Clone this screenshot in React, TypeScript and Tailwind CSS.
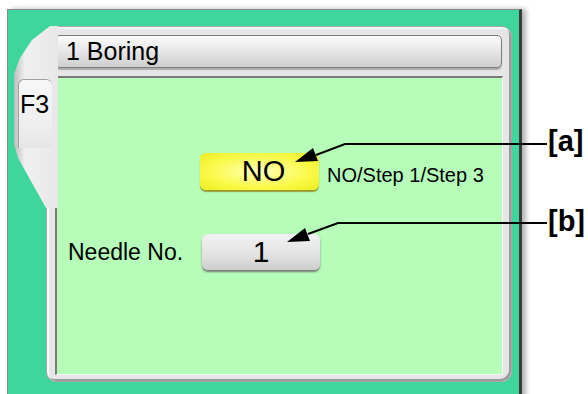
import React from "react";

const font = { fontFamily: '"Liberation Sans", Arial, sans-serif' };

function Arrows() {
  return (
    <svg className="absolute left-0 top-0 pointer-events-none" width={588} height={394}>
      <polyline points="547,144 345,144 316,155" fill="none" stroke="#000" strokeWidth={2} />
      <polygon points="295,162 318,161 313,148" fill="#000" />
      <polyline points="547,223 338,223 308,234" fill="none" stroke="#000" strokeWidth={2} />
      <polygon points="287,242 310,241 305,228" fill="#000" />
    </svg>
  );
}

export default function App() {
  return (
    <div className="relative w-[588px] h-[394px] bg-white overflow-hidden flex" style={font}>
      {/* machine screen frame */}
      <div className="ml-[7px] mt-[9px] w-[515px] h-[390px] bg-[#3ed69c] border-l border-t border-[#8a8a8a] border-r-[3px] border-r-[#3a3a3a] shadow-[4px_0_5px_rgba(0,0,0,0.3)] pt-[16px] pl-[6px] flex items-start">
        {/* left tab bulge */}
        <div className="relative w-[32px] h-[182px] shrink-0">
          <div
            className="absolute left-0 top-0 w-[44px] h-[182px] bg-[linear-gradient(to_right,#bdbdbd,#f0f0f0_25%,#e8e8e8)]"
            style={{ clipPath: "polygon(36px 0, 44px 0, 44px 182px, 32px 182px, 4px 132px, 0 118px, 0 48px, 6px 32px, 18px 14px)" }}
          />
          <div className="relative z-10 ml-[4px] mt-[53px] w-[34px] h-[69px] rounded-t-[6px] border-l border-t border-[#a0a0a0] bg-[linear-gradient(to_bottom,#f7f7f7,#eeeeee_70%,#e6e6e6)] pt-[10px] pl-[1px] text-[25px] leading-[1.15] text-black">
            F3
          </div>
        </div>

        {/* main panel */}
        <div className="w-[466px] h-[356px] rounded-[10px] border border-[#a8a8a8] bg-[#e6e6e6] shadow-[inset_2px_2px_0_#fafafa,inset_-2px_-2px_0_#9a9a9a] pl-[8px] pt-[8px] flex flex-col">
          <div className="w-[447px] h-[33px] rounded-[5px] border border-[#7c7c7c] bg-[linear-gradient(to_bottom,#fbfbfb,#e6e6e6_50%,#cfcfcf)] shadow-[0_2px_1px_rgba(0,0,0,0.25)] flex items-center pl-[10px] text-[25px] text-black">
            1 Boring
          </div>
          <div className="mt-[8px] w-[448px] h-[299px] border-t-2 border-l-2 border-[#7a7a7a] border-r border-b border-r-[#f4f4f4] border-b-[#f4f4f4] bg-[#b5fdb9] flex flex-col">
            <div className="flex items-center ml-[143px] mt-[75px]">
              <div className="w-[119px] h-[37px] rounded-[6px] bg-[radial-gradient(ellipse_at_center,#ffffb8,#fafa48_60%,#ecec20)] shadow-[0_2px_1px_#9c9c30] flex items-center justify-center text-[29px] leading-none text-black pl-[8px]">
                NO
              </div>
              <span className="ml-[8px] mt-[6px] text-[20px] text-black">NO/Step 1/Step 3</span>
            </div>
            <div className="flex items-center ml-[11px] mt-[44px]">
              <span className="w-[134px] text-[23px] text-black">Needle No.</span>
              <div className="w-[118px] h-[36px] rounded-[6px] bg-[linear-gradient(to_bottom,#f2f2f2,#e2e2e2_60%,#cdcdcd)] shadow-[0_2px_2px_#7a7a7a] flex items-center justify-center text-[30px] leading-none text-black">
                1
              </div>
            </div>
          </div>
        </div>
      </div>

      {/* callout labels */}
      <div className="ml-[26px] flex flex-col text-[29px] font-bold leading-none text-black">
        <span className="mt-[127px]">[a]</span>
        <span className="mt-[51px]">[b]</span>
      </div>

      <Arrows />
    </div>
  );
}
